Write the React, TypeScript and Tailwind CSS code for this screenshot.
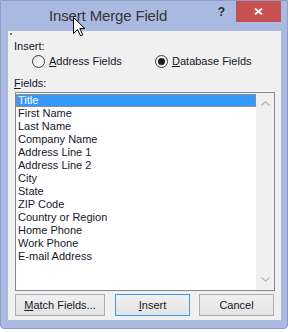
const fields = [
  "Title",
  "First Name",
  "Last Name",
  "Company Name",
  "Address Line 1",
  "Address Line 2",
  "City",
  "State",
  "ZIP Code",
  "Country or Region",
  "Home Phone",
  "Work Phone",
  "E-mail Address",
];

const font = { fontFamily: '"Liberation Sans", Arial, sans-serif' };

export default function App() {
  return (
    <div className="h-[332px] w-[288px] bg-white text-[11px] text-[#16162a]" style={font}>
      <div className="relative flex h-[329px] flex-col rounded-b-[4px] border border-[#8c9dcc] bg-[#aab9e0]">
        <TitleBar />
        <div className="relative ml-[7px] mr-[6px] flex h-[289px] flex-col bg-[#f0f0f0] pl-[6px]">
          <span className="absolute left-[2px] top-[2px] h-[2px] w-[2px] bg-[#777]" />
          <p className="mt-[9px] h-[13px] leading-[13px]">Insert:</p>
          <div className="mt-[2px] flex h-[13px] items-center">
            <Radio label="Address Fields" hot="A" className="ml-[18px] w-[123px]" />
            <Radio label="Database Fields" hot="D" checked />
          </div>
          <p className="mt-[9px] h-[13px] leading-[13px]">
            <u>F</u>ields:
          </p>
          <FieldList />
          <div className="mt-[3px] flex">
            <Button className="ml-[1px] w-[90px]" hot="M" rest="atch Fields..." />
            <Button className="ml-[10px] w-[75px]" hot="I" rest="nsert" primary />
            <Button className="ml-[9px] w-[75px]" rest="Cancel" />
          </div>
        </div>
        <Cursor />
      </div>
    </div>
  );
}

function TitleBar() {
  return (
    <div className="flex h-[30px] items-start">
      <p className="ml-[48px] pt-[7px] text-[15px] leading-[15px] tracking-[-0.15px] text-[#353535]">Insert Merge Field</p>
      <span className="ml-auto pt-[5px] text-[12px] font-bold leading-[13px] text-[#2a2a2a]">?</span>
      <div className="ml-[11px] mr-[6px] flex h-[21px] w-[45px] items-center justify-center bg-[#c75050]">
        <svg width="9" height="7" viewBox="0 0 9 7">
          <path d="M1 0.5 L8 6.5 M8 0.5 L1 6.5" stroke="#fff" strokeWidth="1.8" />
        </svg>
      </div>
    </div>
  );
}

function Radio({ label, hot, checked = false, className = "" }: { label: string; hot: string; checked?: boolean; className?: string }) {
  return (
    <div className={`flex items-center ${className}`}>
      <span className="flex h-[13px] w-[13px] items-center justify-center rounded-full border border-[#3a3a3a] bg-gradient-to-br from-[#e8e8e8] to-white">
        {checked && <span className="h-[7px] w-[7px] rounded-full bg-[#1a1a1a]" />}
      </span>
      <span className="ml-[4px] leading-[13px]">
        <u>{hot}</u>
        {label.slice(1)}
      </span>
    </div>
  );
}

function FieldList() {
  return (
    <div className="ml-[1px] mt-[2px] flex h-[199px] w-[260px] border border-[#828790] bg-white">
      <div className="flex-1 pt-[1px]">
        {fields.map((field, index) => (
          <div
            key={field}
            className={`h-[13px] border pl-[1px] leading-[11px] ${
              index === 0 ? "border-dotted border-[#e8801c] bg-[#3399ff] text-white" : "border-transparent"
            }`}
          >
            {field}
          </div>
        ))}
      </div>
      <div className="flex w-[18px] flex-col items-center justify-between bg-[#f0f0f0] py-[8px]">
        <svg width="9" height="5" viewBox="0 0 9 5">
          <path d="M0.5 4.5 L4.5 0.8 L8.5 4.5" fill="none" stroke="#b4b4b4" strokeWidth="1.2" />
        </svg>
        <svg width="9" height="5" viewBox="0 0 9 5">
          <path d="M0.5 0.5 L4.5 4.2 L8.5 0.5" fill="none" stroke="#b4b4b4" strokeWidth="1.2" />
        </svg>
      </div>
    </div>
  );
}

function Button({ hot, rest, primary = false, className = "" }: { hot?: string; rest: string; primary?: boolean; className?: string }) {
  return (
    <div
      className={`flex h-[22px] items-center justify-center border bg-gradient-to-b from-[#f0f0f0] to-[#e3e3e3] ${
        primary ? "border-[#3d9bef]" : "border-[#acacac]"
      } ${className}`}
    >
      <span className="leading-[13px]">
        {hot && <u>{hot}</u>}
        {rest}
      </span>
    </div>
  );
}

function Cursor() {
  return (
    <svg className="absolute left-[72px] top-[16px]" width="13" height="20" viewBox="0 0 13 20">
      <path d="M0.5 0.5 L0.5 16.5 L4.5 12.5 L7.5 18.8 L9.8 17.8 L6.8 11.5 L11.8 11.5 Z" fill="#fff" stroke="#000" strokeWidth="1" />
    </svg>
  );
}
